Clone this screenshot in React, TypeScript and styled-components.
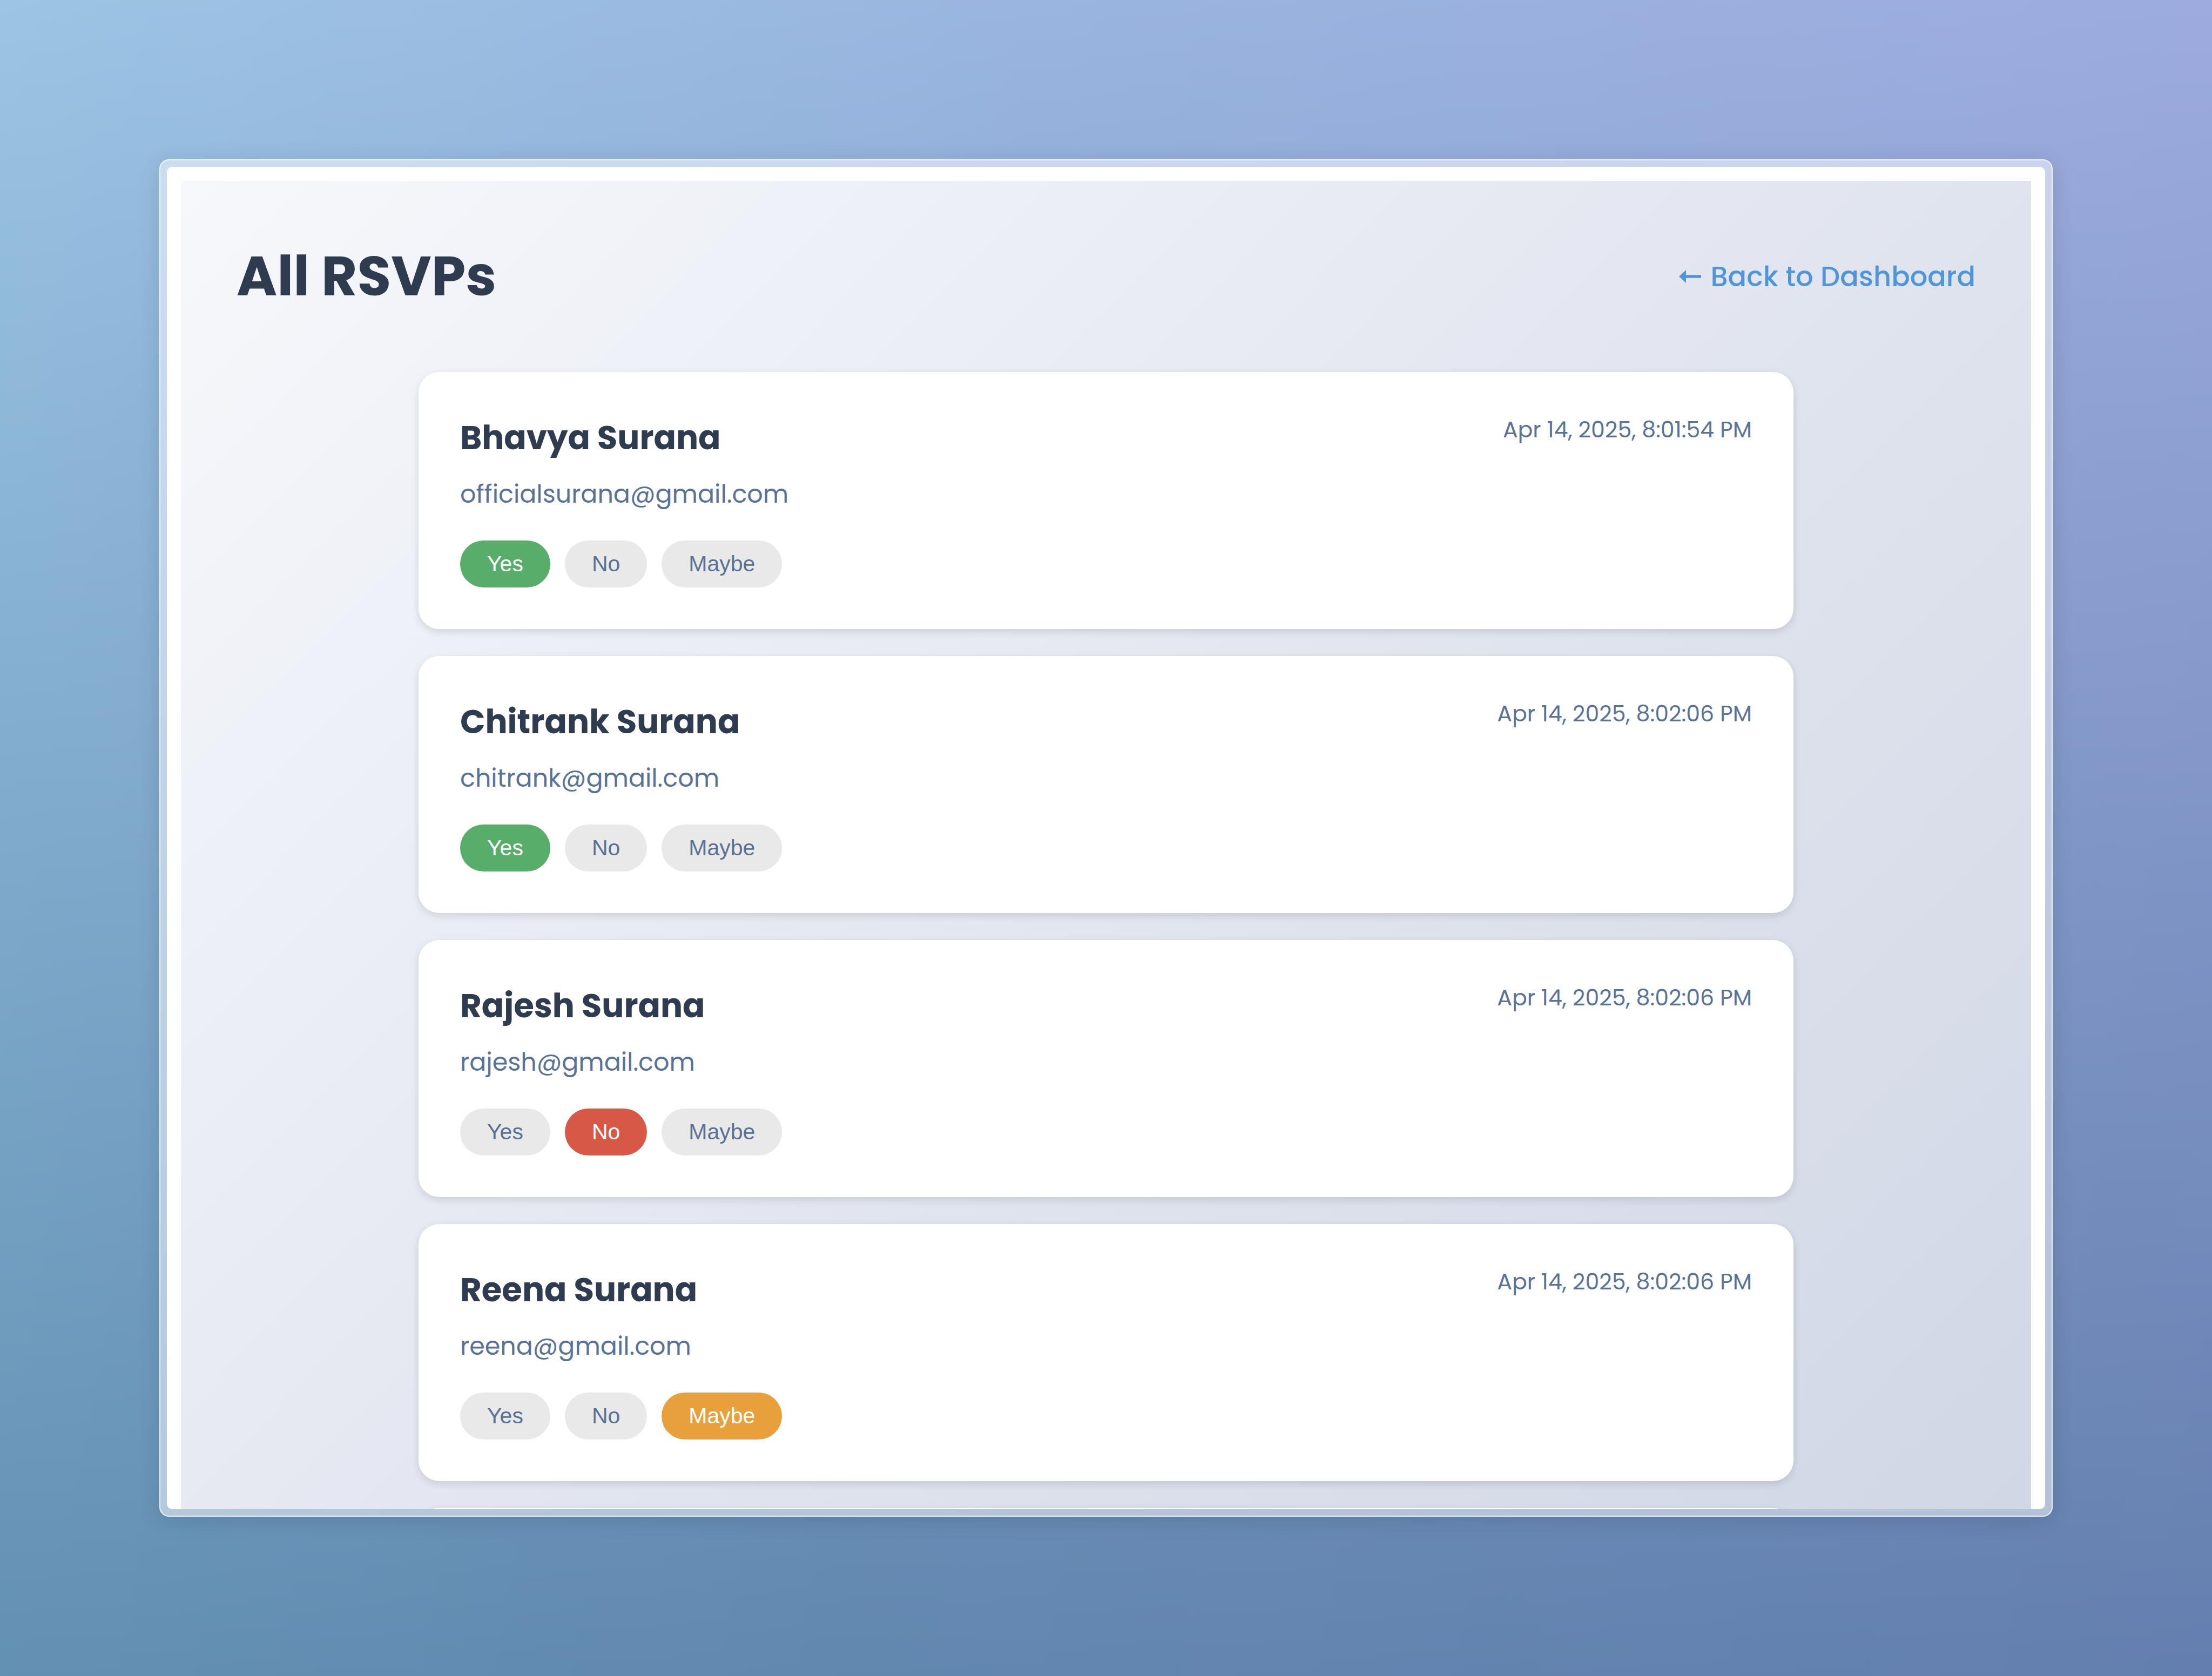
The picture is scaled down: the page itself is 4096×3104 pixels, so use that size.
import React, { useState } from "react";
import styled, { createGlobalStyle } from "styled-components";

const GlobalStyle = createGlobalStyle`
  *, *::before, *::after { box-sizing: border-box; }
  body {
    margin: 0;
    font-family: Poppins, Inter, "Open Sans", sans-serif;
  }
`;

const Backdrop = styled.div`
  display: flex;
  height: 100vh;
  padding: 295px;
  background:
    linear-gradient(178deg, #ffffff 0%, #9ebdc6 100%),
    linear-gradient(100deg, #9cc4e4 0%, #9bb5e0 45%, #a1abe1 100%);
  background-blend-mode: multiply;
`;

const Frame = styled.div`
  display: flex;
  flex: 1;
  min-width: 0;
  padding: 12px;
  border: 2px solid rgba(255, 255, 255, 0.7);
  border-radius: 18px;
  background: rgba(255, 255, 255, 0.5);
  box-shadow: 0 6px 40px rgba(0, 0, 0, 0.12);
`;

const Screen = styled.div`
  flex: 1;
  min-width: 0;
  overflow: hidden;
  padding: 26px 26px 0;
  border-radius: 10px;
  background: #ffffff;
`;

const Page = styled.main`
  min-height: 100%;
  padding: 103px;
  background: linear-gradient(135deg, #f6f8fb 0, #ebeef6 1200px, #dfe3ed 2500px, #d0d7e5 4200px);
`;

const Header = styled.header`
  display: flex;
  align-items: center;
  justify-content: space-between;
  margin-bottom: 103px;
`;

const Title = styled.h1`
  margin: 0;
  font-size: 102px;
  line-height: 148px;
  font-weight: 700;
  color: #2f3c4f;
`;

const BackLink = styled.a`
  display: flex;
  align-items: center;
  gap: 17px;
  font-size: 51px;
  line-height: 72px;
  font-weight: 500;
  color: #5096d6;
  text-decoration: none;
`;

const List = styled.ul`
  display: grid;
  gap: 50px;
  max-width: 2546px;
  margin: 0 auto;
  padding: 0;
  list-style: none;
`;

const Card = styled.li`
  display: flex;
  align-items: flex-start;
  justify-content: space-between;
  padding: 77px;
  border-radius: 38px;
  background: #ffffff;
  box-shadow: 0 5px 15px rgba(0, 0, 0, 0.12);
`;

const Name = styled.h2`
  margin: 0 0 23px;
  font-size: 61px;
  line-height: 90px;
  font-weight: 700;
  color: #2f3c4f;
`;

const Email = styled.p`
  margin: 0 0 50px;
  font-size: 46px;
  line-height: 72px;
  color: #5a7293;
`;

const Stamp = styled.time`
  font-size: 41px;
  line-height: 60px;
  color: #5a7293;
`;

const Choices = styled.div`
  display: flex;
  gap: 27px;
`;

const activeColors = { Yes: "#57ad69", No: "#d75847", Maybe: "#e7a03c" };
type Answer = keyof typeof activeColors;
const answers: Answer[] = ["Yes", "No", "Maybe"];

const Choice = styled.button<{ $fill?: string }>`
  height: 87px;
  padding: 0 50px;
  border: 0;
  border-radius: 44px;
  background: ${(p) => p.$fill ?? "#e9e9e9"};
  color: ${(p) => (p.$fill ? "#ffffff" : "#5a7293")};
  font-family: Arial, "Liberation Sans", sans-serif;
  font-size: 41px;
  line-height: 47px;
  cursor: pointer;
`;

// The next card starts right at the lower edge of the scroll area.
const NextCard = styled(Card)`
  height: 476px;
`;

interface Rsvp {
  name: string;
  email: string;
  time: string;
  answer: Answer;
}

const rsvps: Rsvp[] = [
  { name: "Bhavya Surana", email: "officialsurana@gmail.com", time: "Apr 14, 2025, 8:01:54 PM", answer: "Yes" },
  { name: "Chitrank Surana", email: "chitrank@gmail.com", time: "Apr 14, 2025, 8:02:06 PM", answer: "Yes" },
  { name: "Rajesh Surana", email: "rajesh@gmail.com", time: "Apr 14, 2025, 8:02:06 PM", answer: "No" },
  { name: "Reena Surana", email: "reena@gmail.com", time: "Apr 14, 2025, 8:02:06 PM", answer: "Maybe" },
];

function ArrowLeft() {
  return (
    <svg width="41" height="24" viewBox="0 0 41 24" fill="currentColor" aria-hidden="true">
      <path d="M0 12 13 0v9.2h28v5.6H13V24z" />
    </svg>
  );
}

function RsvpCard({ rsvp }: { rsvp: Rsvp }) {
  const [answer, setAnswer] = useState<Answer>(rsvp.answer);
  return (
    <Card>
      <div>
        <Name>{rsvp.name}</Name>
        <Email>{rsvp.email}</Email>
        <Choices role="group" aria-label={rsvp.name}>
          {answers.map((a) => (
            <Choice
              key={a}
              type="button"
              aria-pressed={a === answer}
              $fill={a === answer ? activeColors[a] : undefined}
              onClick={() => setAnswer(a)}
            >
              {a}
            </Choice>
          ))}
        </Choices>
      </div>
      <Stamp>{rsvp.time}</Stamp>
    </Card>
  );
}

export default function App() {
  return (
    <>
      <GlobalStyle />
      <Backdrop>
        <Frame>
          <Screen>
            <Page>
              <Header>
                <Title>All RSVPs</Title>
                <BackLink href="#dashboard">
                  <ArrowLeft />
                  Back to Dashboard
                </BackLink>
              </Header>
              <List>
                {rsvps.map((r) => (
                  <RsvpCard key={r.email} rsvp={r} />
                ))}
                <NextCard aria-hidden="true" />
              </List>
            </Page>
          </Screen>
        </Frame>
      </Backdrop>
    </>
  );
}
